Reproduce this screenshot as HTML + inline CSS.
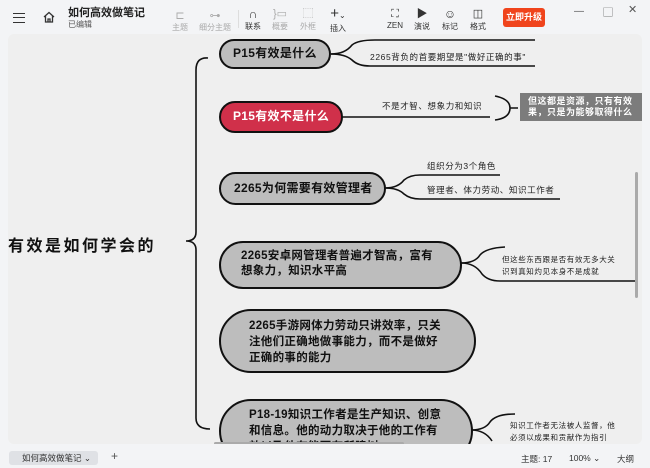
<!DOCTYPE html>
<html><head><meta charset="utf-8"><style>
*{margin:0;padding:0;box-sizing:border-box}
body{width:650px;height:468px;overflow:hidden;background:#f3f4f6;font-family:"Liberation Sans","Noto Sans CJK SC",sans-serif;position:relative}
.a{position:absolute}
.tb{font-size:8px;color:#333;text-align:center}
.dis{color:#aaa}
.canvas{position:absolute;left:8px;top:34px;width:634px;height:410px;background:#efefef;border-radius:6px;overflow:hidden}
.pill{position:absolute;background:#bdbdbd;border:2.5px solid #111;border-radius:40px;font-weight:bold;color:#111;font-size:12px;letter-spacing:.3px}
.t{position:absolute;font-size:8.5px;color:#222;letter-spacing:.6px;white-space:nowrap}
</style></head><body>
<div class="a" style="left:13px;top:13px;width:12px;height:10px;border-top:1.5px solid #333;border-bottom:1.5px solid #333"><div style="margin-top:3px;border-top:1.5px solid #333"></div></div>
<svg class="a" style="left:43px;top:11px" width="12" height="12" viewBox="0 0 12 12"><path d="M1 6 L6 1.5 L11 6 M2.5 5 V11 H9.5 V5 M5 11 V8 H7 V11" fill="none" stroke="#333" stroke-width="1.3"/></svg>
<div class="a" style="left:68px;top:4px;font-size:11px;font-weight:bold;color:#222">如何高效做笔记</div>
<div class="a" style="left:68px;top:19px;font-size:8px;color:#555">已编辑</div>
<div class="a tb dis" style="left:168px;top:9px;width:24px"><div style="font-size:11px">⊏</div>主题</div>
<div class="a tb dis" style="left:195px;top:9px;width:40px"><div style="font-size:11px">⊶</div>细分主题</div>
<div class="a" style="left:238px;top:10px;width:1px;height:18px;background:#ddd"></div>
<div class="a tb" style="left:241px;top:8px;width:24px"><div style="font-size:12px;line-height:13px">∩</div>联系</div>
<div class="a tb dis" style="left:268px;top:8px;width:24px"><div style="font-size:11px;line-height:13px">}▭</div>概要</div>
<div class="a tb dis" style="left:296px;top:8px;width:24px"><div style="font-size:11px;line-height:13px">⬚</div>外框</div>
<div class="a tb" style="left:324px;top:6px;width:28px"><div style="font-size:15px;line-height:15px">+<span style="font-size:8px">⌄</span></div>插入</div>
<div class="a tb" style="left:384px;top:8px;width:22px"><div style="font-size:11px;line-height:13px">⛶</div>ZEN</div>
<div class="a tb" style="left:410px;top:8px;width:24px"><div style="font-size:11px;line-height:13px">▶</div>演说</div>
<div class="a tb" style="left:438px;top:8px;width:24px"><div style="font-size:12px;line-height:13px">☺</div>标记</div>
<div class="a tb" style="left:466px;top:8px;width:24px"><div style="font-size:11px;line-height:13px">◫</div>格式</div>
<div class="a" style="left:503px;top:8px;width:42px;height:19px;background:#f0441c;border-radius:3px;color:#fff;font-size:9px;font-weight:bold;text-align:center;line-height:19px">立即升级</div>
<div class="a" style="left:574px;top:6px;font-size:10px;color:#555">—</div>
<div class="a" style="left:603px;top:4px;font-size:10px;color:#555">▢</div>
<div class="a" style="left:628px;top:3px;font-size:11px;color:#555">✕</div>

<div class="canvas">
<svg class="a" style="left:0;top:0" width="634" height="410" viewBox="8 34 634 410">
<g fill="none" stroke="#111" stroke-width="1.6">
<path d="M208 58 Q196 57 196 70 V232 Q196 241 186 241 Q196 241 196 250 V418 Q196 429 210 429"/>
<path d="M331 54 Q345 54 352 45 Q358 40 375 40 H535"/>
<path d="M331 54 Q345 54 352 60 Q358 66 370 66 H535"/>
<path d="M342 117 H490"/>
<path d="M495 96 Q510 99 510 108 Q510 118 495 120 M510 108 H518"/>
<path d="M385 188 Q398 188 404 180 Q410 175 420 175 H500"/>
<path d="M385 188 Q398 188 404 194 Q410 199 420 199 H560"/>
<path d="M461 263 Q475 263 480 255 Q486 248 505 247"/>
<path d="M461 263 Q475 263 482 274 Q488 281 500 281 H636"/>
<path d="M471 430 Q485 430 490 422 Q496 414 515 414"/>
<path d="M471 430 Q485 430 492 441"/>
</g></svg>
<div class="a" style="left:0px;top:198px;font-size:16px;font-weight:bold;color:#111;letter-spacing:2.5px">有效是如何学会的</div>

<div class="pill" style="left:211px;top:5px;width:112px;height:30px;line-height:25px;padding-left:12px">P15有效是什么</div>
<div class="pill" style="left:211px;top:67px;width:124px;height:32px;line-height:27px;padding-left:12px;background:#d0304a;color:#fff">P15有效不是什么</div>
<div class="pill" style="left:211px;top:138px;width:167px;height:33px;line-height:28px;padding-left:13px">2265为何需要有效管理者</div>
<div class="pill" style="left:211px;top:207px;width:243px;height:48px;padding:6px 0 0 20px;line-height:15px;font-size:11.5px">2265安卓网管理者普遍才智高，富有<br>想象力，知识水平高</div>
<div class="pill" style="left:211px;top:275px;width:257px;height:64px;padding:7px 0 0 28px;line-height:16px;font-size:11.5px">2265手游网体力劳动只讲效率，只关<br>注他们正确地做事能力，而不是做好<br>正确的事的能力</div>
<div class="pill" style="left:211px;top:365px;width:254px;height:64px;padding:6px 0 0 28px;line-height:16px;font-size:11.5px">P18-19知识工作者是生产知识、创意<br>和信息。他的动力取决于他的工作有<br>效以及他在能否有所建树</div>

<div class="t" style="left:362px;top:17px">2265背负的首要期望是"做好正确的事"</div>
<div class="t" style="left:374px;top:66px">不是才智、想象力和知识</div>
<div class="a" style="left:512px;top:59px;width:122px;height:28px;background:#7c7c7c;color:#fff;font-size:9px;font-weight:bold;padding:3px 0 0 8px;line-height:11px;white-space:nowrap;letter-spacing:.5px">但这都是资源，只有有效<br>果，只是为能够取得什么</div>
<div class="t" style="left:419px;top:126px">组织分为3个角色</div>
<div class="t" style="left:419px;top:150px">管理者、体力劳动、知识工作者</div>
<div class="t" style="left:494px;top:220px;font-size:7.5px;line-height:12px">但这些东西跟是否有效无多大关<br>识到真知灼见本身不是成就</div>
<div class="t" style="left:502px;top:386px;font-size:7.5px;line-height:12px">知识工作者无法被人监督，他<br>必须以成果和贡献作为指引</div>
<div class="a" style="left:627px;top:138px;width:3px;height:126px;background:#aaa;border-radius:2px"></div>
<div class="a" style="left:206px;top:408px;width:190px;height:3px;background:#aaa;border-radius:2px"></div>
</div>

<div class="a" style="left:9px;top:451px;width:89px;height:14px;background:#dfe1e5;border-radius:3px;font-size:8.5px;color:#333;padding-left:13px;line-height:14px">如何高效做笔记 ⌄</div>
<div class="a" style="left:111px;top:449px;font-size:12px;color:#555">+</div>
<div class="a" style="left:521px;top:453px;font-size:8.5px;color:#333">主题: 17</div>
<div class="a" style="left:569px;top:453px;font-size:8.5px;color:#333">100% ⌄</div>
<div class="a" style="left:617px;top:453px;font-size:8.5px;color:#333">大纲</div>
</body></html>
